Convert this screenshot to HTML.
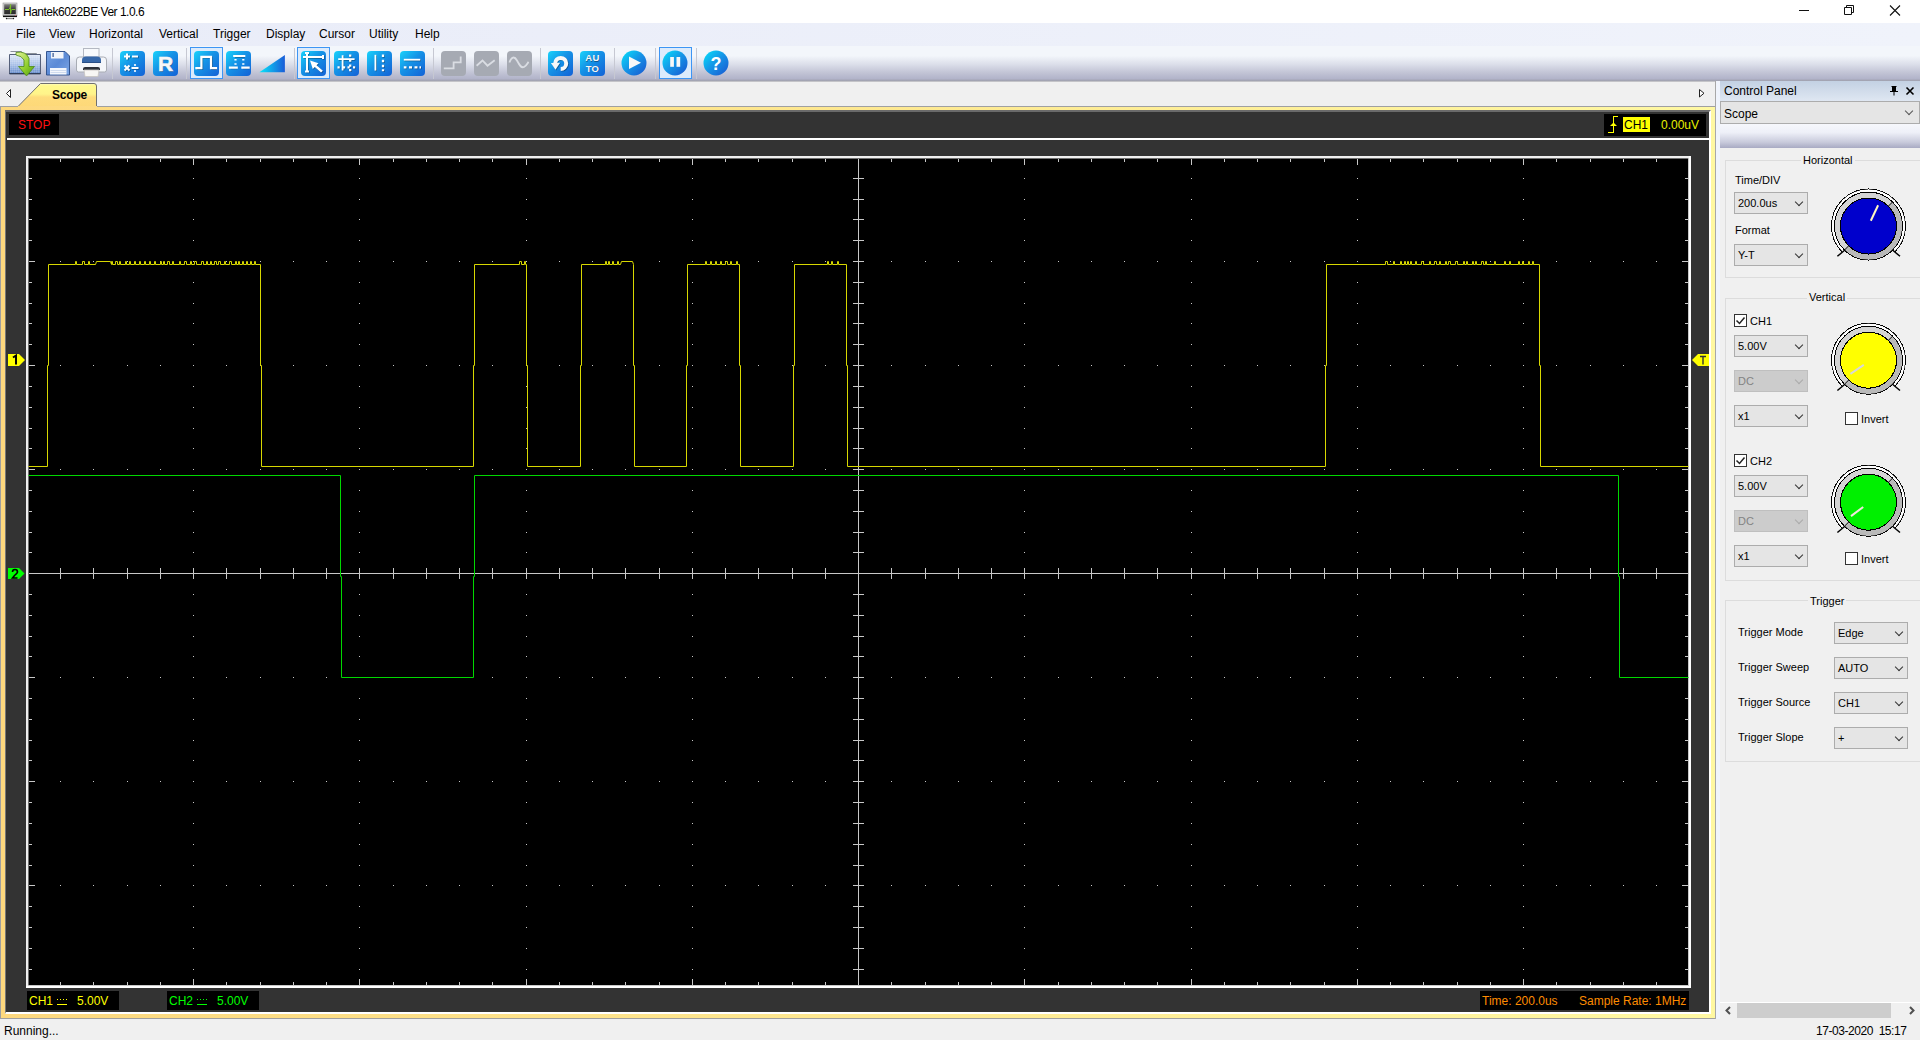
<!DOCTYPE html>
<html><head><meta charset="utf-8">
<style>
*{box-sizing:border-box}
html,body{margin:0;padding:0}
body{width:1920px;height:1040px;overflow:hidden;position:relative;background:#f0f0f0;font-family:"Liberation Sans",sans-serif;color:#000;font-size:12px}
.a{position:absolute}
.t{position:absolute;white-space:nowrap;line-height:1}
#title{left:0;top:0;width:1920px;height:23px;background:#fff}
#menu{left:0;top:23px;width:1920px;height:23px;background:linear-gradient(90deg,#e9ecf8,#f0f3fb)}
#tool{left:0;top:46px;width:1920px;height:35px;background:linear-gradient(#f3f6fb 0%,#f3f6fb 28%,#dcdfea 52%,#c3c5d6 75%,#b2b4ca 93%,#9fa0ad 100%)}
#tabs{left:0;top:81px;width:1716px;height:26px;background:#f0f0f0;border-top:1px solid #c4c4c8}
.sep{position:absolute;top:48px;width:1px;height:31px;background:#c6c8d2}
.ib{position:absolute;border-radius:4px;background:linear-gradient(135deg,#19d3fb 0%,#1592e6 45%,#1461d6 100%)}
.ig{position:absolute;border-radius:4px;background:#a6aab3}
.hl{position:absolute;border:1px solid #3d95f4;background:#dcebfc}
.dd{position:absolute;background:#e5e5e5;border:1px solid #acacac;font-size:11px}
.dd span{position:absolute;left:3px;top:5px;line-height:1}
.dd i{position:absolute;right:5px;top:6px;width:6px;height:6px;border-right:1px solid #333;border-bottom:1px solid #333;transform:rotate(45deg)}
.dis{background:#cccccc;border-color:#bfbfbf;color:#838383}
.dis i{border-color:#aaa}
.grp{position:absolute;border:1px solid #dcdcdc;border-radius:0}
.gt{position:absolute;background:#f0f0f0;font-size:11px;line-height:1;padding:0 2px}
.cb{position:absolute;width:13px;height:13px;border:1px solid #333;background:#fff}
.lbl{position:absolute;font-size:11px;line-height:1;white-space:nowrap}
</style></head><body>

<!-- title bar -->
<div id="title" class="a">
  <svg class="a" style="left:0;top:0" width="20" height="22"><defs><linearGradient id="scr" x1="0" y1="0" x2="0" y2="1"><stop offset="0" stop-color="#808080"/><stop offset="0.5" stop-color="#3a3a3a"/><stop offset="1" stop-color="#2a2a2a"/></linearGradient></defs>
<rect x="3" y="3" width="14" height="13" fill="#d4d4d4" stroke="#9a9a9a" stroke-width="0.6"/>
<rect x="4.2" y="4.2" width="11.6" height="10" fill="url(#scr)"/>
<path d="M5 9.5h4l1-2 0.6-3v9l0.6-3.5 0.6-0.5h3.5" stroke="#7cc02a" stroke-width="1" fill="none"/>
<rect x="3" y="15.6" width="14" height="1.5" fill="#111"/>
<rect x="6" y="18" width="8" height="1.2" fill="#888"/><circle cx="6.5" cy="18.5" r="0.7" fill="#222"/><circle cx="13.5" cy="18.5" r="0.7" fill="#222"/>
<circle cx="15.5" cy="15.3" r="0.5" fill="#e66"/>
</svg>
  <div class="t" style="left:23px;top:6px;font-size:12px;letter-spacing:-0.5px;color:#000">Hantek6022BE Ver 1.0.6</div>
  <svg class="a" style="left:1795px;top:4px" width="120" height="14">
    <path d="M4 6.5h10" stroke="#111" stroke-width="1"/>
    <path d="M49.5 3.5h7v7h-7z M51.5 3.5v-2h7v7h-2" stroke="#111" fill="none" stroke-width="1"/>
    <path d="M95 1.5l10 10M105 1.5l-10 10" stroke="#111" stroke-width="1.1"/>
  </svg>
</div>

<!-- menu -->
<div id="menu" class="a">
  <div class="t" style="left:16px;top:5px">File</div>
  <div class="t" style="left:49px;top:5px">View</div>
  <div class="t" style="left:89px;top:5px">Horizontal</div>
  <div class="t" style="left:159px;top:5px">Vertical</div>
  <div class="t" style="left:213px;top:5px">Trigger</div>
  <div class="t" style="left:266px;top:5px">Display</div>
  <div class="t" style="left:319px;top:5px">Cursor</div>
  <div class="t" style="left:369px;top:5px">Utility</div>
  <div class="t" style="left:415px;top:5px">Help</div>
</div>

<!-- toolbar -->
<div id="tool" class="a"></div>
<div class="sep" style="left:112px"></div><div class="sep" style="left:186px"></div><div class="sep" style="left:294px"></div><div class="sep" style="left:433px"></div><div class="sep" style="left:540px"></div><div class="sep" style="left:614px"></div><div class="sep" style="left:655px"></div><div class="sep" style="left:696px"></div><svg class="a" style="left:8px;top:49px" width="34" height="28">
<defs><linearGradient id="fg" x1="0" y1="0" x2="0" y2="1"><stop offset="0" stop-color="#dfe8f7"/><stop offset="0.5" stop-color="#a9c1e8"/><stop offset="1" stop-color="#5f86c8"/></linearGradient>
<linearGradient id="ag" x1="0" y1="0" x2="1" y2="1"><stop offset="0" stop-color="#e6f59a"/><stop offset="0.6" stop-color="#8ccc2a"/><stop offset="1" stop-color="#4f9a10"/></linearGradient>
<pattern id="gp" width="2" height="2" patternUnits="userSpaceOnUse"><path d="M0 0.5h2M0.5 0v2" stroke="#ffffff" stroke-opacity="0.25" stroke-width="0.5"/></pattern></defs>
<path d="M2.5 2.5h11l1 2h14l1 1.5v2" fill="#eef0f2" stroke="#8a9098"/>
<path d="M1.5 5.5h31v19.5h-31z" fill="url(#fg)" stroke="#55607a"/>
<path d="M2 6h30v19H2z" fill="url(#gp)"/>
<path d="M1.5 24.5h31" stroke="#2f3d5a"/>
<path d="M8 3.5q10-2 13 6v8h5.5l-8 9.5-8-9.5h5.5v-6.5q-2-4-8-5z" fill="url(#ag)" stroke="#4c8a18" stroke-width="0.8"/>
</svg><svg class="a" style="left:45px;top:50px" width="27" height="27">
<defs><linearGradient id="sg" x1="0" y1="0" x2="1" y2="1"><stop offset="0" stop-color="#7aa4e4"/><stop offset="0.5" stop-color="#5b8ad6"/><stop offset="1" stop-color="#7fa8e6"/></linearGradient></defs>
<path d="M1.5 1.5h18.5l4.5 4.5v19h-23z" fill="url(#sg)" stroke="#34558f"/>
<rect x="6" y="2" width="12.5" height="6.5" fill="#f2f5fb"/><rect x="7.5" y="3" width="1.2" height="4" fill="#34558f"/>
<rect x="5" y="18" width="16.5" height="6.5" fill="#f4f7fc"/>
<path d="M5.5 20.5h15.5M5.5 22.5h15.5" stroke="#c5d3ea" stroke-width="0.8"/>
</svg><svg class="a" style="left:75px;top:47px" width="33" height="31">
<rect x="8.5" y="1.5" width="15.5" height="9" fill="#f7f9fc" stroke="#b4b8c2"/>
<path d="M1.5 13q0-3 3-3h24q3 0 3 3v10q0 2-2 2h-26q-2 0-2-2z" fill="#f4f6fa" stroke="#a8acb4"/>
<path d="M7 13q0-3.5 4-3.5h11q4 0 4 3.5v2.5H7z" fill="#3767a8"/>
<path d="M7 15.5h19" stroke="#2a4f86"/>
<path d="M8 22q0-2 2-2h13q2 0 2 2v1H8z" fill="#2c3038"/>
<path d="M9 23h15l-1 6.5H10z" fill="#f8f6f4" stroke="#c8c4c0" stroke-width="0.8"/>
</svg><div class="ib" style="left:120px;top:51px;width:25px;height:25px"></div><svg class="a" style="left:120px;top:51px" width="25" height="25"><g transform="translate(0.8 0.8)" opacity="0.35"><path d="M4 5.5h6M7 2.5v6M12 5.5h6M4.5 14.5l5 5M9.5 14.5l-5 5M11.5 17h7" stroke="#000" stroke-width="2" fill="none"/></g><path d="M4 5.5h6M7 2.5v6M12 5.5h6" stroke="#fff" stroke-width="2" fill="none"/><path d="M4.5 14.5l5 5M9.5 14.5l-5 5M11.5 17h7" stroke="#fff" stroke-width="2" fill="none"/><circle cx="15" cy="14" r="1.1" fill="#fff"/><circle cx="15" cy="20" r="1.1" fill="#fff"/></svg><div class="ib" style="left:153px;top:51px;width:25px;height:25px"></div><svg class="a" style="left:153px;top:51px" width="25" height="25"><text x="13.3" y="21" text-anchor="middle" font-family="Liberation Sans" font-weight="bold" font-size="21" fill="#000" opacity="0.35">R</text><text x="12.5" y="20.2" text-anchor="middle" font-family="Liberation Sans" font-weight="bold" font-size="21" fill="#f6f6f6" stroke="#f6f6f6" stroke-width="0.6">R</text></svg><div class="hl" style="left:190px;top:47px;width:33px;height:32px"></div><div class="hl" style="left:297px;top:47px;width:33px;height:32px"></div><div class="hl" style="left:659px;top:47px;width:33px;height:32px"></div><div class="ib" style="left:194px;top:51px;width:25px;height:25px"></div><svg class="a" style="left:194px;top:51px" width="25" height="25"><path d="M3.2 18h5V6.6h9.6V18h5" stroke="#000" stroke-opacity="0.35" stroke-width="2" fill="none"/><path d="M2.4 17.2h5V5.8h9.6V17.2h5" stroke="#fff" stroke-width="2.2" fill="none" stroke-linecap="square"/></svg><div class="ib" style="left:226px;top:51px;width:25px;height:25px"></div><svg class="a" style="left:226px;top:51px" width="25" height="25"><g transform="translate(0.7 0.7)" stroke="#000" stroke-opacity="0.35" stroke-width="2" fill="none"><path d="M8.3 5h9.9M4 16.6h6.7M16.4 16.6h6.2M9.5 8.8v0.1M9.5 13v0.1M17.3 8.8v0.1M17.3 13v0.1"/></g><path d="M8.3 5h9.9M4 16.6h6.7M16.4 16.6h6.2" stroke="#fff" stroke-width="2.2" fill="none" stroke-linecap="square"/><path d="M9.5 8v1.6M9.5 12.2v1.6M17.3 8v1.6M17.3 12.2v1.6" stroke="#fff" stroke-width="2.2" fill="none"/></svg><svg class="a" style="left:258px;top:54px" width="28" height="20"><defs><linearGradient id="trg" x1="0" y1="0" x2="1" y2="0"><stop offset="0" stop-color="#08e6fa"/><stop offset="1" stop-color="#1a5cd8"/></linearGradient></defs><path d="M1.4 18.3L26.9 1V18.3z" fill="url(#trg)"/></svg><div class="ib" style="left:301px;top:51px;width:25px;height:25px"></div><svg class="a" style="left:301px;top:51px" width="25" height="25"><g transform="translate(0.7 0.7)" opacity="0.35"><path d="M6 2v18.5M4 2h4M4 20.5h4M2 6.1h20M22 4v4" stroke="#000" stroke-width="2" fill="none"/><path d="M9 9.5L17.5 12.3L15.5 14.3L21.9 19.8L20.1 21.6L13.8 16L11.8 18Z" fill="#000"/></g><path d="M6 2v18.5M4 2h4M4 20.5h4M2 6.1h20M22 4v4" stroke="#fff" stroke-width="2" fill="none"/><path d="M9 9.5L17.5 12.3L15.5 14.3L21.9 19.8L20.1 21.6L13.8 16L11.8 18Z" fill="#fff"/></svg><div class="ib" style="left:334px;top:51px;width:25px;height:25px"></div><svg class="a" style="left:334px;top:51px" width="25" height="25"><g transform="translate(0.7 0.7)" opacity="0.35"><path d="M8.6 4.3v15.3M4.2 8.1h16.4" stroke="#000" stroke-width="1.8" fill="none"/><path d="M16.2 3.5v2.2M16.2 8.5v2.2M16.2 13.5v2.2M16.2 18v2.2M3.5 16.3h2.2M9 16.3h2.2M13.5 16.3h2.2M19 16.3h2.2" stroke="#000" stroke-width="2.3" fill="none"/></g><path d="M8.6 4.3v15.3M4.2 8.1h16.4" stroke="#fff" stroke-width="1.8" fill="none"/><path d="M16.2 3.5v2.2M16.2 8.5v2.2M16.2 13.5v2.2M16.2 18v2.2M3.5 16.3h2.2M9 16.3h2.2M13.5 16.3h2.2M19 16.3h2.2" stroke="#fff" stroke-width="2.3" fill="none"/></svg><div class="ib" style="left:367px;top:51px;width:25px;height:25px"></div><svg class="a" style="left:367px;top:51px" width="25" height="25"><g transform="translate(0.7 0.7)" opacity="0.35"><path d="M8.4 3.8v15.8" stroke="#000" stroke-width="1.8" fill="none"/><path d="M16 3.5v2.5M16 8.8v2.5M16 13.8v2.5M16 18.3v2" stroke="#000" stroke-width="2.3" fill="none"/></g><path d="M8.4 3.8v15.8" stroke="#fff" stroke-width="1.8" fill="none"/><path d="M16 3.5v2.5M16 8.8v2.5M16 13.8v2.5M16 18.3v2" stroke="#fff" stroke-width="2.3" fill="none"/></svg><div class="ib" style="left:400px;top:51px;width:25px;height:25px"></div><svg class="a" style="left:400px;top:51px" width="25" height="25"><g transform="translate(0.7 0.7)" opacity="0.35"><path d="M3.8 8.7h16.5" stroke="#000" stroke-width="1.8" fill="none"/><path d="M3.8 16.3h2.7M9 16.3h3M14.5 16.3h3M19.5 16.3h1.5" stroke="#000" stroke-width="2.3" fill="none"/></g><path d="M3.8 8.7h16.5" stroke="#fff" stroke-width="1.8" fill="none"/><path d="M3.8 16.3h2.7M9 16.3h3M14.5 16.3h3M19.5 16.3h1.5" stroke="#fff" stroke-width="2.3" fill="none"/></svg><div class="ig" style="left:441px;top:51px;width:25px;height:25px"></div><svg class="a" style="left:441px;top:51px" width="25" height="25"><path d="M2.8 17.4h9.8v-6h7.1v-6" stroke="#dadde3" stroke-width="1.8" fill="none"/></svg><div class="ig" style="left:474px;top:51px;width:25px;height:25px"></div><svg class="a" style="left:474px;top:51px" width="25" height="25"><path d="M2.6 14.7L8.5 9.5L13.5 14.7L20.7 9.2" stroke="#dadde3" stroke-width="1.8" fill="none"/></svg><div class="ig" style="left:507px;top:51px;width:25px;height:25px"></div><svg class="a" style="left:507px;top:51px" width="25" height="25"><path d="M2.4 11.5C4.5 5.5 7.5 5 10 9.5S14 17.5 17 16S20.5 12 21.6 10.9" stroke="#dadde3" stroke-width="1.8" fill="none"/></svg><div class="ib" style="left:548px;top:51px;width:25px;height:25px"></div><svg class="a" style="left:548px;top:51px" width="25" height="25"><g transform="translate(0.7 0.7)" opacity="0.35"><path d="M12.7 17.9A5.5 5.5 0 1 0 7.2 12.4" stroke="#000" stroke-width="4" fill="none"/><path d="M2.9 12.1L12.1 11.8L7.5 18.8Z" fill="#000"/></g><path d="M12.7 17.9A5.5 5.5 0 1 0 7.2 12.4" stroke="#f8f8f8" stroke-width="4" fill="none"/><path d="M2.9 12.1L12.1 11.8L7.5 18.8Z" fill="#f8f8f8"/></svg><div class="ib" style="left:580px;top:51px;width:25px;height:25px"></div><svg class="a" style="left:580px;top:51px" width="25" height="25"><g transform="translate(0.6 0.6)" opacity="0.35"><text x="12.5" y="10" text-anchor="middle" font-family="Liberation Sans" font-weight="bold" font-size="9.5" fill="#000" letter-spacing="0.3">AU</text><text x="12.5" y="20.5" text-anchor="middle" font-family="Liberation Sans" font-weight="bold" font-size="9.5" fill="#000" letter-spacing="0.3">TO</text></g><text x="12.5" y="10" text-anchor="middle" font-family="Liberation Sans" font-weight="bold" font-size="9.5" fill="#f8f8f8" letter-spacing="0.3">AU</text><text x="12.5" y="20.5" text-anchor="middle" font-family="Liberation Sans" font-weight="bold" font-size="9.5" fill="#f8f8f8" letter-spacing="0.3">TO</text></svg><svg class="a" style="left:621px;top:50px" width="26" height="26"><defs><linearGradient id="cg621" x1="0" y1="0" x2="1" y2="1"><stop offset="0" stop-color="#06e2fb"/><stop offset="0.5" stop-color="#1592e6"/><stop offset="1" stop-color="#1a55cf"/></linearGradient></defs><circle cx="13" cy="13" r="12.5" fill="url(#cg621)"/><path d="M8 6.5v12.5l12-6.2z" fill="#f8f8f8"/></svg><svg class="a" style="left:662px;top:50px" width="26" height="26"><defs><linearGradient id="cg662" x1="0" y1="0" x2="1" y2="1"><stop offset="0" stop-color="#06e2fb"/><stop offset="0.5" stop-color="#1592e6"/><stop offset="1" stop-color="#1a55cf"/></linearGradient></defs><circle cx="13" cy="13" r="12.5" fill="url(#cg662)"/><rect x="8.2" y="7" width="3.7" height="9.8" fill="#f8f8f8"/><rect x="14.5" y="7" width="3.7" height="9.8" fill="#f8f8f8"/></svg><svg class="a" style="left:703px;top:50px" width="26" height="26"><defs><linearGradient id="cg703" x1="0" y1="0" x2="1" y2="1"><stop offset="0" stop-color="#06e2fb"/><stop offset="0.5" stop-color="#1592e6"/><stop offset="1" stop-color="#1a55cf"/></linearGradient></defs><circle cx="13" cy="13" r="12.5" fill="url(#cg703)"/><text x="13" y="20" text-anchor="middle" font-family="Liberation Sans" font-weight="bold" font-size="18" fill="#fff">?</text></svg>

<!-- tab strip -->
<div id="tabs" class="a"></div>
<svg class="a" style="left:0;top:81px" width="1716" height="27">
  <path d="M10.5 8.5v8l-4-4z" fill="#fff" stroke="#222"/>
  <path d="M1699.5 8.5v7.5l4.5-3.75z" fill="#fff" stroke="#222"/>
  <defs><linearGradient id="tabg" x1="0" y1="0" x2="0" y2="1"><stop offset="0" stop-color="#fffcc0"/><stop offset="0.1" stop-color="#fff98c"/><stop offset="0.45" stop-color="#fff48a"/><stop offset="0.58" stop-color="#fedc7c"/><stop offset="1" stop-color="#fdd878"/></linearGradient></defs>
  <path d="M17.5 26 L40.5 2.5 L94 2.5 Q96.5 2.5 96.5 5 L96.5 26 Z" fill="url(#tabg)" stroke="#707070" stroke-width="1"/>
</svg>
<div class="t" style="left:52px;top:89px;font-size:12px;font-weight:bold;letter-spacing:-0.2px">Scope</div>

<!-- scope panel -->
<div class="a" style="left:0;top:106px;width:1716px;height:913px;background:linear-gradient(90deg,#fdd87e,#fff8a2);border-left:1px solid #a0a0a0;border-right:1px solid #a0a0a0;border-bottom:1px solid #a0a0a0"></div>
<div class="a" style="left:0;top:106px;width:18px;height:1px;background:#a0a0a0"></div><div class="a" style="left:97px;top:106px;width:1618px;height:1px;background:#a0a0a0"></div>
<div class="a" style="left:5px;top:110px;width:1706px;height:904px;background:#333;border-left:1px solid #777;border-top:2px solid #6a6a6a;border-right:2px solid #fff;border-bottom:2px solid #fff"></div>
<div class="a" style="left:7px;top:138px;width:1702px;height:2px;background:#fff"></div>
<!-- STOP -->
<div class="a" style="left:9px;top:114px;width:50px;height:21px;background:#000"></div>
<div class="t" style="left:18px;top:119px;font-size:12px;color:#ff1010">STOP</div>
<!-- trigger readout -->
<div class="a" style="left:1604px;top:114px;width:102px;height:22px;background:#000"></div>
<svg class="a" style="left:1606px;top:116px" width="14" height="18"><path d="M2 16.5H7.5V0.5H12" stroke="#ffff00" fill="none" shape-rendering="crispEdges"/><path d="M4 10L7.5 6.5L11 10Z" fill="#ffff00"/></svg>
<div class="a" style="left:1623px;top:117px;width:27px;height:15px;background:#ffff00"></div>
<div class="t" style="left:1624px;top:119px;font-size:12px;color:#000">CH1</div>
<div class="t" style="left:1661px;top:119px;font-size:12px;color:#e8f000">0.00uV</div>

<svg class="a" style="left:0;top:0" width="1716" height="1019"><g shape-rendering="crispEdges"><rect x="26" y="156" width="1665" height="832" fill="#f0f0f0"/><rect x="1688" y="158" width="1" height="828" fill="#c8c8c8"/><rect x="1689" y="156" width="2" height="832" fill="#fff"/><rect x="28" y="985" width="1661" height="1" fill="#c8c8c8"/><rect x="26" y="986" width="1665" height="2" fill="#fff"/><rect x="28" y="158" width="1660" height="1" fill="#707070"/><rect x="28" y="158" width="1" height="827" fill="#707070"/><rect x="29" y="159" width="1659" height="826" fill="#000"/></g><path d="M193 178h1v1h-1zM193 199h1v1h-1zM193 219h1v1h-1zM193 240h1v1h-1zM193 282h1v1h-1zM193 303h1v1h-1zM193 323h1v1h-1zM193 344h1v1h-1zM193 386h1v1h-1zM193 407h1v1h-1zM193 428h1v1h-1zM193 448h1v1h-1zM193 490h1v1h-1zM193 511h1v1h-1zM193 532h1v1h-1zM193 552h1v1h-1zM193 594h1v1h-1zM193 615h1v1h-1zM193 636h1v1h-1zM193 656h1v1h-1zM193 698h1v1h-1zM193 719h1v1h-1zM193 740h1v1h-1zM193 760h1v1h-1zM193 802h1v1h-1zM193 823h1v1h-1zM193 844h1v1h-1zM193 865h1v1h-1zM193 906h1v1h-1zM193 927h1v1h-1zM193 948h1v1h-1zM193 969h1v1h-1zM359 178h1v1h-1zM359 199h1v1h-1zM359 219h1v1h-1zM359 240h1v1h-1zM359 282h1v1h-1zM359 303h1v1h-1zM359 323h1v1h-1zM359 344h1v1h-1zM359 386h1v1h-1zM359 407h1v1h-1zM359 428h1v1h-1zM359 448h1v1h-1zM359 490h1v1h-1zM359 511h1v1h-1zM359 532h1v1h-1zM359 552h1v1h-1zM359 594h1v1h-1zM359 615h1v1h-1zM359 636h1v1h-1zM359 656h1v1h-1zM359 698h1v1h-1zM359 719h1v1h-1zM359 740h1v1h-1zM359 760h1v1h-1zM359 802h1v1h-1zM359 823h1v1h-1zM359 844h1v1h-1zM359 865h1v1h-1zM359 906h1v1h-1zM359 927h1v1h-1zM359 948h1v1h-1zM359 969h1v1h-1zM526 178h1v1h-1zM526 199h1v1h-1zM526 219h1v1h-1zM526 240h1v1h-1zM526 282h1v1h-1zM526 303h1v1h-1zM526 323h1v1h-1zM526 344h1v1h-1zM526 386h1v1h-1zM526 407h1v1h-1zM526 428h1v1h-1zM526 448h1v1h-1zM526 490h1v1h-1zM526 511h1v1h-1zM526 532h1v1h-1zM526 552h1v1h-1zM526 594h1v1h-1zM526 615h1v1h-1zM526 636h1v1h-1zM526 656h1v1h-1zM526 698h1v1h-1zM526 719h1v1h-1zM526 740h1v1h-1zM526 760h1v1h-1zM526 802h1v1h-1zM526 823h1v1h-1zM526 844h1v1h-1zM526 865h1v1h-1zM526 906h1v1h-1zM526 927h1v1h-1zM526 948h1v1h-1zM526 969h1v1h-1zM692 178h1v1h-1zM692 199h1v1h-1zM692 219h1v1h-1zM692 240h1v1h-1zM692 282h1v1h-1zM692 303h1v1h-1zM692 323h1v1h-1zM692 344h1v1h-1zM692 386h1v1h-1zM692 407h1v1h-1zM692 428h1v1h-1zM692 448h1v1h-1zM692 490h1v1h-1zM692 511h1v1h-1zM692 532h1v1h-1zM692 552h1v1h-1zM692 594h1v1h-1zM692 615h1v1h-1zM692 636h1v1h-1zM692 656h1v1h-1zM692 698h1v1h-1zM692 719h1v1h-1zM692 740h1v1h-1zM692 760h1v1h-1zM692 802h1v1h-1zM692 823h1v1h-1zM692 844h1v1h-1zM692 865h1v1h-1zM692 906h1v1h-1zM692 927h1v1h-1zM692 948h1v1h-1zM692 969h1v1h-1zM1024 178h1v1h-1zM1024 199h1v1h-1zM1024 219h1v1h-1zM1024 240h1v1h-1zM1024 282h1v1h-1zM1024 303h1v1h-1zM1024 323h1v1h-1zM1024 344h1v1h-1zM1024 386h1v1h-1zM1024 407h1v1h-1zM1024 428h1v1h-1zM1024 448h1v1h-1zM1024 490h1v1h-1zM1024 511h1v1h-1zM1024 532h1v1h-1zM1024 552h1v1h-1zM1024 594h1v1h-1zM1024 615h1v1h-1zM1024 636h1v1h-1zM1024 656h1v1h-1zM1024 698h1v1h-1zM1024 719h1v1h-1zM1024 740h1v1h-1zM1024 760h1v1h-1zM1024 802h1v1h-1zM1024 823h1v1h-1zM1024 844h1v1h-1zM1024 865h1v1h-1zM1024 906h1v1h-1zM1024 927h1v1h-1zM1024 948h1v1h-1zM1024 969h1v1h-1zM1191 178h1v1h-1zM1191 199h1v1h-1zM1191 219h1v1h-1zM1191 240h1v1h-1zM1191 282h1v1h-1zM1191 303h1v1h-1zM1191 323h1v1h-1zM1191 344h1v1h-1zM1191 386h1v1h-1zM1191 407h1v1h-1zM1191 428h1v1h-1zM1191 448h1v1h-1zM1191 490h1v1h-1zM1191 511h1v1h-1zM1191 532h1v1h-1zM1191 552h1v1h-1zM1191 594h1v1h-1zM1191 615h1v1h-1zM1191 636h1v1h-1zM1191 656h1v1h-1zM1191 698h1v1h-1zM1191 719h1v1h-1zM1191 740h1v1h-1zM1191 760h1v1h-1zM1191 802h1v1h-1zM1191 823h1v1h-1zM1191 844h1v1h-1zM1191 865h1v1h-1zM1191 906h1v1h-1zM1191 927h1v1h-1zM1191 948h1v1h-1zM1191 969h1v1h-1zM1357 178h1v1h-1zM1357 199h1v1h-1zM1357 219h1v1h-1zM1357 240h1v1h-1zM1357 282h1v1h-1zM1357 303h1v1h-1zM1357 323h1v1h-1zM1357 344h1v1h-1zM1357 386h1v1h-1zM1357 407h1v1h-1zM1357 428h1v1h-1zM1357 448h1v1h-1zM1357 490h1v1h-1zM1357 511h1v1h-1zM1357 532h1v1h-1zM1357 552h1v1h-1zM1357 594h1v1h-1zM1357 615h1v1h-1zM1357 636h1v1h-1zM1357 656h1v1h-1zM1357 698h1v1h-1zM1357 719h1v1h-1zM1357 740h1v1h-1zM1357 760h1v1h-1zM1357 802h1v1h-1zM1357 823h1v1h-1zM1357 844h1v1h-1zM1357 865h1v1h-1zM1357 906h1v1h-1zM1357 927h1v1h-1zM1357 948h1v1h-1zM1357 969h1v1h-1zM1523 178h1v1h-1zM1523 199h1v1h-1zM1523 219h1v1h-1zM1523 240h1v1h-1zM1523 282h1v1h-1zM1523 303h1v1h-1zM1523 323h1v1h-1zM1523 344h1v1h-1zM1523 386h1v1h-1zM1523 407h1v1h-1zM1523 428h1v1h-1zM1523 448h1v1h-1zM1523 490h1v1h-1zM1523 511h1v1h-1zM1523 532h1v1h-1zM1523 552h1v1h-1zM1523 594h1v1h-1zM1523 615h1v1h-1zM1523 636h1v1h-1zM1523 656h1v1h-1zM1523 698h1v1h-1zM1523 719h1v1h-1zM1523 740h1v1h-1zM1523 760h1v1h-1zM1523 802h1v1h-1zM1523 823h1v1h-1zM1523 844h1v1h-1zM1523 865h1v1h-1zM1523 906h1v1h-1zM1523 927h1v1h-1zM1523 948h1v1h-1zM1523 969h1v1h-1zM60 261h1v1h-1zM93 261h1v1h-1zM127 261h1v1h-1zM160 261h1v1h-1zM193 261h1v1h-1zM226 261h1v1h-1zM260 261h1v1h-1zM293 261h1v1h-1zM326 261h1v1h-1zM359 261h1v1h-1zM393 261h1v1h-1zM426 261h1v1h-1zM459 261h1v1h-1zM492 261h1v1h-1zM526 261h1v1h-1zM559 261h1v1h-1zM592 261h1v1h-1zM625 261h1v1h-1zM659 261h1v1h-1zM692 261h1v1h-1zM725 261h1v1h-1zM758 261h1v1h-1zM792 261h1v1h-1zM825 261h1v1h-1zM891 261h1v1h-1zM925 261h1v1h-1zM958 261h1v1h-1zM991 261h1v1h-1zM1024 261h1v1h-1zM1058 261h1v1h-1zM1091 261h1v1h-1zM1124 261h1v1h-1zM1157 261h1v1h-1zM1191 261h1v1h-1zM1224 261h1v1h-1zM1257 261h1v1h-1zM1290 261h1v1h-1zM1324 261h1v1h-1zM1357 261h1v1h-1zM1390 261h1v1h-1zM1423 261h1v1h-1zM1457 261h1v1h-1zM1490 261h1v1h-1zM1523 261h1v1h-1zM1556 261h1v1h-1zM1590 261h1v1h-1zM1623 261h1v1h-1zM1656 261h1v1h-1zM60 365h1v1h-1zM93 365h1v1h-1zM127 365h1v1h-1zM160 365h1v1h-1zM193 365h1v1h-1zM226 365h1v1h-1zM260 365h1v1h-1zM293 365h1v1h-1zM326 365h1v1h-1zM359 365h1v1h-1zM393 365h1v1h-1zM426 365h1v1h-1zM459 365h1v1h-1zM492 365h1v1h-1zM526 365h1v1h-1zM559 365h1v1h-1zM592 365h1v1h-1zM625 365h1v1h-1zM659 365h1v1h-1zM692 365h1v1h-1zM725 365h1v1h-1zM758 365h1v1h-1zM792 365h1v1h-1zM825 365h1v1h-1zM891 365h1v1h-1zM925 365h1v1h-1zM958 365h1v1h-1zM991 365h1v1h-1zM1024 365h1v1h-1zM1058 365h1v1h-1zM1091 365h1v1h-1zM1124 365h1v1h-1zM1157 365h1v1h-1zM1191 365h1v1h-1zM1224 365h1v1h-1zM1257 365h1v1h-1zM1290 365h1v1h-1zM1324 365h1v1h-1zM1357 365h1v1h-1zM1390 365h1v1h-1zM1423 365h1v1h-1zM1457 365h1v1h-1zM1490 365h1v1h-1zM1523 365h1v1h-1zM1556 365h1v1h-1zM1590 365h1v1h-1zM1623 365h1v1h-1zM1656 365h1v1h-1zM60 469h1v1h-1zM93 469h1v1h-1zM127 469h1v1h-1zM160 469h1v1h-1zM193 469h1v1h-1zM226 469h1v1h-1zM260 469h1v1h-1zM293 469h1v1h-1zM326 469h1v1h-1zM359 469h1v1h-1zM393 469h1v1h-1zM426 469h1v1h-1zM459 469h1v1h-1zM492 469h1v1h-1zM526 469h1v1h-1zM559 469h1v1h-1zM592 469h1v1h-1zM625 469h1v1h-1zM659 469h1v1h-1zM692 469h1v1h-1zM725 469h1v1h-1zM758 469h1v1h-1zM792 469h1v1h-1zM825 469h1v1h-1zM891 469h1v1h-1zM925 469h1v1h-1zM958 469h1v1h-1zM991 469h1v1h-1zM1024 469h1v1h-1zM1058 469h1v1h-1zM1091 469h1v1h-1zM1124 469h1v1h-1zM1157 469h1v1h-1zM1191 469h1v1h-1zM1224 469h1v1h-1zM1257 469h1v1h-1zM1290 469h1v1h-1zM1324 469h1v1h-1zM1357 469h1v1h-1zM1390 469h1v1h-1zM1423 469h1v1h-1zM1457 469h1v1h-1zM1490 469h1v1h-1zM1523 469h1v1h-1zM1556 469h1v1h-1zM1590 469h1v1h-1zM1623 469h1v1h-1zM1656 469h1v1h-1zM60 677h1v1h-1zM93 677h1v1h-1zM127 677h1v1h-1zM160 677h1v1h-1zM193 677h1v1h-1zM226 677h1v1h-1zM260 677h1v1h-1zM293 677h1v1h-1zM326 677h1v1h-1zM359 677h1v1h-1zM393 677h1v1h-1zM426 677h1v1h-1zM459 677h1v1h-1zM492 677h1v1h-1zM526 677h1v1h-1zM559 677h1v1h-1zM592 677h1v1h-1zM625 677h1v1h-1zM659 677h1v1h-1zM692 677h1v1h-1zM725 677h1v1h-1zM758 677h1v1h-1zM792 677h1v1h-1zM825 677h1v1h-1zM891 677h1v1h-1zM925 677h1v1h-1zM958 677h1v1h-1zM991 677h1v1h-1zM1024 677h1v1h-1zM1058 677h1v1h-1zM1091 677h1v1h-1zM1124 677h1v1h-1zM1157 677h1v1h-1zM1191 677h1v1h-1zM1224 677h1v1h-1zM1257 677h1v1h-1zM1290 677h1v1h-1zM1324 677h1v1h-1zM1357 677h1v1h-1zM1390 677h1v1h-1zM1423 677h1v1h-1zM1457 677h1v1h-1zM1490 677h1v1h-1zM1523 677h1v1h-1zM1556 677h1v1h-1zM1590 677h1v1h-1zM1623 677h1v1h-1zM1656 677h1v1h-1zM60 781h1v1h-1zM93 781h1v1h-1zM127 781h1v1h-1zM160 781h1v1h-1zM193 781h1v1h-1zM226 781h1v1h-1zM260 781h1v1h-1zM293 781h1v1h-1zM326 781h1v1h-1zM359 781h1v1h-1zM393 781h1v1h-1zM426 781h1v1h-1zM459 781h1v1h-1zM492 781h1v1h-1zM526 781h1v1h-1zM559 781h1v1h-1zM592 781h1v1h-1zM625 781h1v1h-1zM659 781h1v1h-1zM692 781h1v1h-1zM725 781h1v1h-1zM758 781h1v1h-1zM792 781h1v1h-1zM825 781h1v1h-1zM891 781h1v1h-1zM925 781h1v1h-1zM958 781h1v1h-1zM991 781h1v1h-1zM1024 781h1v1h-1zM1058 781h1v1h-1zM1091 781h1v1h-1zM1124 781h1v1h-1zM1157 781h1v1h-1zM1191 781h1v1h-1zM1224 781h1v1h-1zM1257 781h1v1h-1zM1290 781h1v1h-1zM1324 781h1v1h-1zM1357 781h1v1h-1zM1390 781h1v1h-1zM1423 781h1v1h-1zM1457 781h1v1h-1zM1490 781h1v1h-1zM1523 781h1v1h-1zM1556 781h1v1h-1zM1590 781h1v1h-1zM1623 781h1v1h-1zM1656 781h1v1h-1zM60 885h1v1h-1zM93 885h1v1h-1zM127 885h1v1h-1zM160 885h1v1h-1zM193 885h1v1h-1zM226 885h1v1h-1zM260 885h1v1h-1zM293 885h1v1h-1zM326 885h1v1h-1zM359 885h1v1h-1zM393 885h1v1h-1zM426 885h1v1h-1zM459 885h1v1h-1zM492 885h1v1h-1zM526 885h1v1h-1zM559 885h1v1h-1zM592 885h1v1h-1zM625 885h1v1h-1zM659 885h1v1h-1zM692 885h1v1h-1zM725 885h1v1h-1zM758 885h1v1h-1zM792 885h1v1h-1zM825 885h1v1h-1zM891 885h1v1h-1zM925 885h1v1h-1zM958 885h1v1h-1zM991 885h1v1h-1zM1024 885h1v1h-1zM1058 885h1v1h-1zM1091 885h1v1h-1zM1124 885h1v1h-1zM1157 885h1v1h-1zM1191 885h1v1h-1zM1224 885h1v1h-1zM1257 885h1v1h-1zM1290 885h1v1h-1zM1324 885h1v1h-1zM1357 885h1v1h-1zM1390 885h1v1h-1zM1423 885h1v1h-1zM1457 885h1v1h-1zM1490 885h1v1h-1zM1523 885h1v1h-1zM1556 885h1v1h-1zM1590 885h1v1h-1zM1623 885h1v1h-1zM1656 885h1v1h-1z" fill="#c8c8c8"/><path d="M60.5 159v3M60.5 985v-3M93.5 159v3M93.5 985v-3M127.5 159v3M127.5 985v-3M160.5 159v3M160.5 985v-3M193.5 159v6M193.5 985v-6M226.5 159v3M226.5 985v-3M260.5 159v3M260.5 985v-3M293.5 159v3M293.5 985v-3M326.5 159v3M326.5 985v-3M359.5 159v6M359.5 985v-6M393.5 159v3M393.5 985v-3M426.5 159v3M426.5 985v-3M459.5 159v3M459.5 985v-3M492.5 159v3M492.5 985v-3M526.5 159v6M526.5 985v-6M559.5 159v3M559.5 985v-3M592.5 159v3M592.5 985v-3M625.5 159v3M625.5 985v-3M659.5 159v3M659.5 985v-3M692.5 159v6M692.5 985v-6M725.5 159v3M725.5 985v-3M758.5 159v3M758.5 985v-3M792.5 159v3M792.5 985v-3M825.5 159v3M825.5 985v-3M858.5 159v6M858.5 985v-6M891.5 159v3M891.5 985v-3M925.5 159v3M925.5 985v-3M958.5 159v3M958.5 985v-3M991.5 159v3M991.5 985v-3M1024.5 159v6M1024.5 985v-6M1058.5 159v3M1058.5 985v-3M1091.5 159v3M1091.5 985v-3M1124.5 159v3M1124.5 985v-3M1157.5 159v3M1157.5 985v-3M1191.5 159v6M1191.5 985v-6M1224.5 159v3M1224.5 985v-3M1257.5 159v3M1257.5 985v-3M1290.5 159v3M1290.5 985v-3M1324.5 159v3M1324.5 985v-3M1357.5 159v6M1357.5 985v-6M1390.5 159v3M1390.5 985v-3M1423.5 159v3M1423.5 985v-3M1457.5 159v3M1457.5 985v-3M1490.5 159v3M1490.5 985v-3M1523.5 159v6M1523.5 985v-6M1556.5 159v3M1556.5 985v-3M1590.5 159v3M1590.5 985v-3M1623.5 159v3M1623.5 985v-3M1656.5 159v3M1656.5 985v-3M29 178.5h3M1688 178.5h-3M29 199.5h3M1688 199.5h-3M29 219.5h3M1688 219.5h-3M29 240.5h3M1688 240.5h-3M29 261.5h6M1688 261.5h-6M29 282.5h3M1688 282.5h-3M29 303.5h3M1688 303.5h-3M29 323.5h3M1688 323.5h-3M29 344.5h3M1688 344.5h-3M29 365.5h6M1688 365.5h-6M29 386.5h3M1688 386.5h-3M29 407.5h3M1688 407.5h-3M29 428.5h3M1688 428.5h-3M29 448.5h3M1688 448.5h-3M29 469.5h6M1688 469.5h-6M29 490.5h3M1688 490.5h-3M29 511.5h3M1688 511.5h-3M29 532.5h3M1688 532.5h-3M29 552.5h3M1688 552.5h-3M29 573.5h6M1688 573.5h-6M29 594.5h3M1688 594.5h-3M29 615.5h3M1688 615.5h-3M29 636.5h3M1688 636.5h-3M29 656.5h3M1688 656.5h-3M29 677.5h6M1688 677.5h-6M29 698.5h3M1688 698.5h-3M29 719.5h3M1688 719.5h-3M29 740.5h3M1688 740.5h-3M29 760.5h3M1688 760.5h-3M29 781.5h6M1688 781.5h-6M29 802.5h3M1688 802.5h-3M29 823.5h3M1688 823.5h-3M29 844.5h3M1688 844.5h-3M29 865.5h3M1688 865.5h-3M29 885.5h6M1688 885.5h-6M29 906.5h3M1688 906.5h-3M29 927.5h3M1688 927.5h-3M29 948.5h3M1688 948.5h-3M29 969.5h3M1688 969.5h-3M858.5 159V985M29 573.5H1688M853 178.5h11M853 199.5h11M853 219.5h11M853 240.5h11M853 261.5h11M853 282.5h11M853 303.5h11M853 323.5h11M853 344.5h11M853 365.5h11M853 386.5h11M853 407.5h11M853 428.5h11M853 448.5h11M853 469.5h11M853 490.5h11M853 511.5h11M853 532.5h11M853 552.5h11M853 594.5h11M853 615.5h11M853 636.5h11M853 656.5h11M853 677.5h11M853 698.5h11M853 719.5h11M853 740.5h11M853 760.5h11M853 781.5h11M853 802.5h11M853 823.5h11M853 844.5h11M853 865.5h11M853 885.5h11M853 906.5h11M853 927.5h11M853 948.5h11M853 969.5h11M60.5 568v11M93.5 568v11M127.5 568v11M160.5 568v11M193.5 568v11M226.5 568v11M260.5 568v11M293.5 568v11M326.5 568v11M359.5 568v11M393.5 568v11M426.5 568v11M459.5 568v11M492.5 568v11M526.5 568v11M559.5 568v11M592.5 568v11M625.5 568v11M659.5 568v11M692.5 568v11M725.5 568v11M758.5 568v11M792.5 568v11M825.5 568v11M891.5 568v11M925.5 568v11M958.5 568v11M991.5 568v11M1024.5 568v11M1058.5 568v11M1091.5 568v11M1124.5 568v11M1157.5 568v11M1191.5 568v11M1224.5 568v11M1257.5 568v11M1290.5 568v11M1324.5 568v11M1357.5 568v11M1390.5 568v11M1423.5 568v11M1457.5 568v11M1490.5 568v11M1523.5 568v11M1556.5 568v11M1590.5 568v11M1623.5 568v11M1656.5 568v11" stroke="#c8c8c8" stroke-width="1" fill="none" shape-rendering="crispEdges"/><path d="M28 466 L47 466 L47 365 L48 365 L48 264 L75 264 L75 261 L76 261 L76 264L82 264 L82 261 L84 261 L84 264L88 264 L88 261 L89 261 L89 264 L95 264 L96 261 L110 261 L111 264 L111 264 L111 261 L112 261 L112 264L115 264 L115 261 L117 261 L117 264L119 264 L119 261 L120 261 L120 264L125 264 L125 261 L126 261 L126 264L129 264 L129 261 L130 261 L130 264L134 264 L134 261 L135 261 L135 264L139 264 L139 261 L140 261 L140 264L144 264 L144 261 L145 261 L145 264L149 264 L149 261 L150 261 L150 264L154 264 L154 261 L155 261 L155 264L160 264 L160 261 L161 261 L161 264L163 264 L163 261 L164 261 L164 264L167 264 L167 261 L169 261 L169 264L172 264 L172 261 L173 261 L173 264L179 264 L179 261 L180 261 L180 264L184 264 L184 261 L186 261 L186 264L190 264 L190 261 L191 261 L191 264L194 264 L194 261 L196 261 L196 264L201 264 L201 261 L203 261 L203 264L206 264 L206 261 L207 261 L207 264L210 264 L210 261 L211 261 L211 264L214 264 L214 261 L216 261 L216 264L218 264 L218 261 L220 261 L220 264L224 264 L224 261 L225 261 L225 264L229 264 L229 261 L231 261 L231 264L235 264 L235 261 L236 261 L236 264L238 264 L238 261 L239 261 L239 264L242 264 L242 261 L243 261 L243 264L246 264 L246 261 L247 261 L247 264L250 264 L250 261 L251 261 L251 264L254 264 L254 261 L255 261 L255 264 L260 264 L260 365 L261 365 L261 466 L473 466 L473 365 L474 365 L474 264 L519 264 L519 261 L521 261 L521 264L524 264 L524 261 L525 261 L525 264 L526 264 L526 365 L527 365 L527 466 L580 466 L580 365 L581 365 L581 264 L605 264 L605 261 L606 261 L606 264L608 264 L608 261 L609 261 L609 264L612 264 L612 261 L613 261 L613 264L617 264 L617 261 L618 261 L618 264 L620 264 L621 261 L632 261 L633 264 L633 264 L633 365 L634 365 L634 466 L686 466 L686 365 L687 365 L687 264 L705 264 L705 261 L706 261 L706 264L710 264 L710 261 L711 261 L711 264L715 264 L715 261 L716 261 L716 264L720 264 L720 261 L721 261 L721 264L725 264 L725 261 L727 261 L727 264L730 264 L730 261 L731 261 L731 264L736 264 L736 261 L737 261 L737 264 L739 264 L739 365 L740 365 L740 466 L793 466 L793 365 L794 365 L794 264 L827 264 L827 261 L828 261 L828 264L831 264 L831 261 L832 261 L832 264L837 264 L837 261 L838 261 L838 264 L846 264 L846 365 L847 365 L847 466 L1325 466 L1325 365 L1326 365 L1326 264  L1385 264 L1385 261 L1387 261 L1387 264L1393 264 L1393 261 L1394 261 L1394 264L1400 264 L1400 261 L1401 261 L1401 264L1404 264 L1404 261 L1405 261 L1405 264L1407 264 L1407 261 L1408 261 L1408 264L1410 264 L1410 261 L1411 261 L1411 264L1415 264 L1415 261 L1416 261 L1416 264L1421 264 L1421 261 L1423 261 L1423 264L1429 264 L1429 261 L1430 261 L1430 264L1434 264 L1434 261 L1436 261 L1436 264L1439 264 L1439 261 L1440 261 L1440 264L1445 264 L1445 261 L1446 261 L1446 264L1448 264 L1448 261 L1450 261 L1450 264 L1455 264 L1455 261 L1457 261 L1457 264L1463 264 L1463 261 L1464 261 L1464 264L1466 264 L1466 261 L1467 261 L1467 264L1472 264 L1472 261 L1473 261 L1473 264L1475 264 L1475 261 L1476 261 L1476 264L1481 264 L1481 261 L1483 261 L1483 264L1485 264 L1485 261 L1486 261 L1486 264L1494 264 L1494 261 L1495 261 L1495 264L1504 264 L1504 261 L1505 261 L1505 264L1509 264 L1509 261 L1510 261 L1510 264L1518 264 L1518 261 L1519 261 L1519 264L1522 264 L1522 261 L1523 261 L1523 264L1528 264 L1528 261 L1529 261 L1529 264L1532 264 L1532 261 L1533 261 L1533 264 L1539 264 L1539 365 L1540 365 L1540 466 L1688 466" stroke="#d7d700" stroke-width="1" fill="none" transform="translate(0.5 0.5)"/><path d="M28 475 L340 475 L340 576 L341 576 L341 677 L473 677 L473 576 L474 576 L474 475 L1618 475 L1618 576 L1619 576 L1619 677 L1688 677" stroke="#00d700" stroke-width="1" fill="none" transform="translate(0.5 0.5)"/></svg>

<!-- markers -->
<svg class="a" style="left:7px;top:353px" width="20" height="14"><path d="M1 1h11l6 6-6 6h-11z" fill="#ffff00"/><path d="M6 4.5l3-2v9" stroke="#000" stroke-width="2" fill="none"/></svg>
<svg class="a" style="left:7px;top:567px" width="20" height="14"><path d="M1 1h11l5.5 5.5-5.5 5.5h-11z" fill="#00ff00"/><path d="M5.5 5q0-2.5 2.5-2.5t2.5 2.5q0 1-3 3.5l-2 2.5h5" stroke="#000" stroke-width="1.6" fill="none"/></svg>
<svg class="a" style="left:1691px;top:353px" width="20" height="14"><path d="M1 7l6-6h11v12h-11z" fill="#ffff00"/><path d="M9 3.5h6M12 3.5v8" stroke="#333" stroke-width="1.4" fill="none"/></svg>

<!-- bottom readouts -->
<div class="a" style="left:27px;top:991px;width:92px;height:19px;background:#000"></div>
<div class="t" style="left:29px;top:995px;font-size:12px;color:#ffff00">CH1</div>
<svg class="a" style="left:56px;top:997px" width="12" height="10"><path d="M1 2.5h1M4 2.5h1M7 2.5h1M10 2.5h1M1 7.5h10" stroke="#ffff00"/></svg>
<div class="t" style="left:77px;top:995px;font-size:12px;color:#ffff00">5.00V</div>
<div class="a" style="left:167px;top:991px;width:92px;height:19px;background:#000"></div>
<div class="t" style="left:169px;top:995px;font-size:12px;color:#00ff00">CH2</div>
<svg class="a" style="left:196px;top:997px" width="12" height="10"><path d="M1 2.5h1M4 2.5h1M7 2.5h1M10 2.5h1M1 7.5h10" stroke="#00ff00"/></svg>
<div class="t" style="left:217px;top:995px;font-size:12px;color:#00ff00">5.00V</div>
<div class="a" style="left:1480px;top:991px;width:209px;height:19px;background:#000"></div>
<div class="t" style="left:1482px;top:995px;font-size:12px;color:#ff8c00">Time: 200.0us</div>
<div class="t" style="left:1579px;top:995px;font-size:12px;color:#ff8c00">Sample Rate: 1MHz</div>

<!-- separator strip -->
<div class="a" style="left:1715px;top:81px;width:1px;height:938px;background:#a8a8a8"></div><div class="a" style="left:1716px;top:81px;width:4px;height:938px;background:#f0f4fc"></div>

<div class="a" style="left:1720px;top:81px;width:200px;height:20px;background:linear-gradient(#c3d1e3,#dfe7f2)"></div><div class="t" style="left:1724px;top:85px;font-size:12px">Control Panel</div><svg class="a" style="left:1888px;top:85px" width="30" height="12"><path d="M3.5 1.5h5M4.5 1.5v5M7.5 1.5v5M2 6.5h8M6 6.5v4" stroke="#000" fill="none"/><path d="M5 2h2v4H5z" fill="#000"/><path d="M18.5 2.5l7 7M25.5 2.5l-7 7" stroke="#000" stroke-width="1.6"/></svg><div class="dd" style="left:1720px;top:101px;width:200px;height:23px;font-size:12px"><span style="top:6px;left:3px">Scope</span><i style="right:7px;top:6px;width:6px;height:6px;border-color:#555"></i></div><div class="a" style="left:1720px;top:124px;width:200px;height:24px;background:linear-gradient(#f6f7fc 0%,#eef0f8 35%,#c9cbdc 75%,#a8aac3 100%)"></div><div class="grp" style="left:1725px;top:160px;width:210px;height:118px"></div><div class="gt" style="left:1801px;top:155px">Horizontal</div><div class="lbl" style="left:1735px;top:175px">Time/DIV</div><div class="dd" style="left:1734px;top:192px;width:74px;height:22px"><span>200.0us</span><i></i></div><div class="lbl" style="left:1735px;top:225px">Format</div><div class="dd" style="left:1734px;top:244px;width:74px;height:22px"><span>Y-T</span><i></i></div><div class="grp" style="left:1725px;top:298px;width:210px;height:283px"></div><div class="gt" style="left:1807px;top:292px">Vertical</div><div class="cb" style="left:1734px;top:314px"></div><svg class="a" style="left:1734px;top:314px" width="13" height="13"><path d="M2.5 6.5l3 3 5-6" stroke="#222" stroke-width="1.5" fill="none"/></svg><div class="lbl" style="left:1750px;top:316px">CH1</div><div class="dd" style="left:1734px;top:335px;width:74px;height:22px"><span>5.00V</span><i></i></div><div class="dd dis" style="left:1734px;top:370px;width:74px;height:22px"><span>DC</span><i></i></div><div class="dd" style="left:1734px;top:405px;width:74px;height:22px"><span>x1</span><i></i></div><div class="cb" style="left:1845px;top:412px"></div><div class="lbl" style="left:1861px;top:414px">Invert</div><div class="cb" style="left:1734px;top:454px"></div><svg class="a" style="left:1734px;top:454px" width="13" height="13"><path d="M2.5 6.5l3 3 5-6" stroke="#222" stroke-width="1.5" fill="none"/></svg><div class="lbl" style="left:1750px;top:456px">CH2</div><div class="dd" style="left:1734px;top:475px;width:74px;height:22px"><span>5.00V</span><i></i></div><div class="dd dis" style="left:1734px;top:510px;width:74px;height:22px"><span>DC</span><i></i></div><div class="dd" style="left:1734px;top:545px;width:74px;height:22px"><span>x1</span><i></i></div><div class="cb" style="left:1845px;top:552px"></div><div class="lbl" style="left:1861px;top:554px">Invert</div><div class="grp" style="left:1725px;top:600px;width:210px;height:162px"></div><div class="gt" style="left:1808px;top:596px">Trigger</div><div class="lbl" style="left:1738px;top:627px">Trigger Mode</div><div class="dd" style="left:1834px;top:622px;width:74px;height:22px"><span>Edge</span><i></i></div><div class="lbl" style="left:1738px;top:662px">Trigger Sweep</div><div class="dd" style="left:1834px;top:657px;width:74px;height:22px"><span>AUTO</span><i></i></div><div class="lbl" style="left:1738px;top:697px">Trigger Source</div><div class="dd" style="left:1834px;top:692px;width:74px;height:22px"><span>CH1</span><i></i></div><div class="lbl" style="left:1738px;top:732px">Trigger Slope</div><div class="dd" style="left:1834px;top:727px;width:74px;height:22px"><span>+</span><i></i></div><svg class="a" style="left:0;top:0" width="1920" height="1040" style="pointer-events:none"><path d="M1842.34 252.16A37.00 37.00 0 1 1 1894.66 252.16" stroke="#000" stroke-width="1" fill="none" shape-rendering="crispEdges"/><path d="M1843.40 251.10A35.50 35.50 0 1 1 1893.60 251.10" stroke="#fff" stroke-width="2" fill="none"/><circle cx="1868.50" cy="226.00" r="34" fill="#d4d4d4" stroke="#000" stroke-width="1" shape-rendering="crispEdges"/><path d="M1868.50 226.00 L1892.19 202.31 A33.5 33.5 0 0 1 1844.81 249.69 Z" fill="#b9b9b9"/><circle cx="1868.50" cy="226.00" r="28" fill="#0000cc" stroke="#000" stroke-width="1" shape-rendering="crispEdges"/><path d="M1888.30 206.20L1892.54 201.96" stroke="#000" stroke-width="1"/><path d="M1848.70 245.80L1844.46 250.04" stroke="#000" stroke-width="1"/><path d="M1837.40 256.30L1844.90 250.00 M1892.50 250.00L1900.00 256.30" stroke="#000" stroke-width="1.5"/><path d="M1870.80 220.70L1878.10 205.30" stroke="#fff8c0" stroke-width="2"/><path d="M1842.34 386.36A37.00 37.00 0 1 1 1894.66 386.36" stroke="#000" stroke-width="1" fill="none" shape-rendering="crispEdges"/><path d="M1843.40 385.30A35.50 35.50 0 1 1 1893.60 385.30" stroke="#fff" stroke-width="2" fill="none"/><circle cx="1868.50" cy="360.20" r="34" fill="#d4d4d4" stroke="#000" stroke-width="1" shape-rendering="crispEdges"/><path d="M1868.50 360.20 L1892.19 336.51 A33.5 33.5 0 0 1 1844.81 383.89 Z" fill="#b9b9b9"/><circle cx="1868.50" cy="360.20" r="28" fill="#ffff00" stroke="#000" stroke-width="1" shape-rendering="crispEdges"/><path d="M1888.30 340.40L1892.54 336.16" stroke="#000" stroke-width="1"/><path d="M1848.70 380.00L1844.46 384.24" stroke="#000" stroke-width="1"/><path d="M1837.40 390.50L1844.90 384.20 M1892.50 384.20L1900.00 390.50" stroke="#000" stroke-width="1.5"/><path d="M1850.40 373.80L1863.80 364.90" stroke="#d8d8d8" stroke-width="2"/><path d="M1842.34 528.36A37.00 37.00 0 1 1 1894.66 528.36" stroke="#000" stroke-width="1" fill="none" shape-rendering="crispEdges"/><path d="M1843.40 527.30A35.50 35.50 0 1 1 1893.60 527.30" stroke="#fff" stroke-width="2" fill="none"/><circle cx="1868.50" cy="502.20" r="34" fill="#d4d4d4" stroke="#000" stroke-width="1" shape-rendering="crispEdges"/><path d="M1868.50 502.20 L1892.19 478.51 A33.5 33.5 0 0 1 1844.81 525.89 Z" fill="#b9b9b9"/><circle cx="1868.50" cy="502.20" r="28" fill="#00f000" stroke="#000" stroke-width="1" shape-rendering="crispEdges"/><path d="M1888.30 482.40L1892.54 478.16" stroke="#000" stroke-width="1"/><path d="M1848.70 522.00L1844.46 526.24" stroke="#000" stroke-width="1"/><path d="M1837.40 532.50L1844.90 526.20 M1892.50 526.20L1900.00 532.50" stroke="#000" stroke-width="1.5"/><path d="M1851.00 516.10L1863.20 507.00" stroke="#f0e6dc" stroke-width="2"/></svg><div class="a" style="left:1720px;top:1002px;width:200px;height:18px;background:#f0f0f0;border-top:1px solid #fff;border-bottom:1px solid #dadada"></div><div class="a" style="left:1737px;top:1003px;width:154px;height:15px;background:#cdcdcd"></div><svg class="a" style="left:1720px;top:1003px" width="200" height="16"><path d="M10 4l-3.5 3.5 3.5 3.5" stroke="#505050" stroke-width="2" fill="none"/><path d="M190 4l3.5 3.5-3.5 3.5" stroke="#505050" stroke-width="2" fill="none"/></svg>

<!-- status bar -->
<div class="a" style="left:0;top:1019px;width:1920px;height:21px;background:#f0f0f0"></div>
<div class="t" style="left:4px;top:1025px;font-size:12px">Running...</div>
<div class="t" style="left:1816px;top:1025px;font-size:12px;letter-spacing:-0.45px">17-03-2020&nbsp;&nbsp;15:17</div>
</body></html>
